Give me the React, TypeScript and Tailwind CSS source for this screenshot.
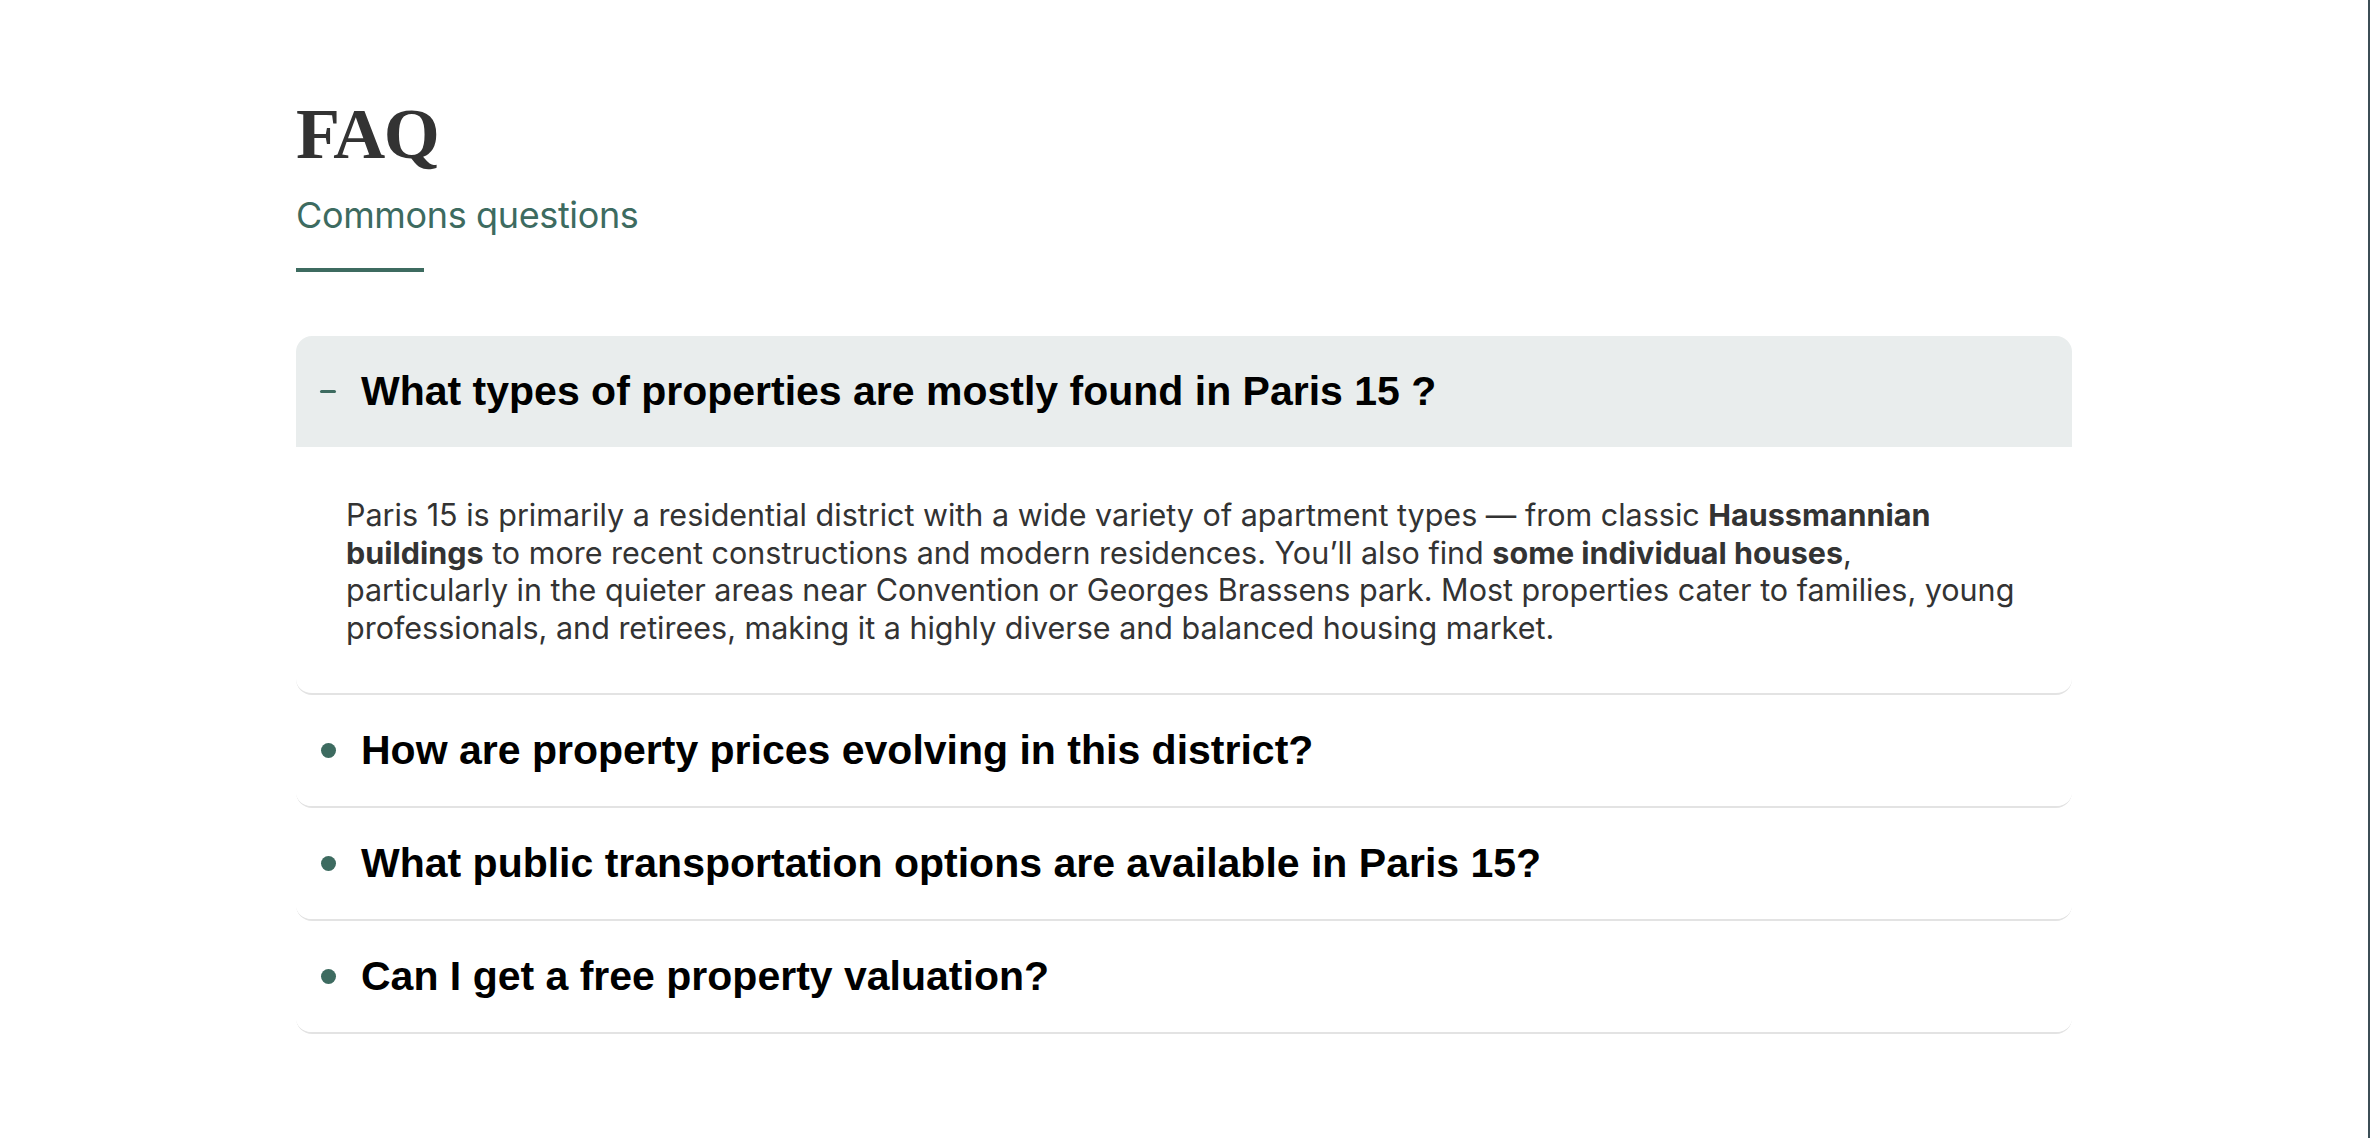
import { useState } from "react"
import type React from "react"

type Faq = {
  question: string
  answer: React.ReactNode
}

const faqs: Faq[] = [
  {
    question: "What types of properties are mostly found in Paris 15 ?",
    answer: (
      <>
        Paris 15 is primarily a residential district with a wide variety of apartment types — from classic{" "}
        <strong className="font-bold">Haussmannian buildings</strong> to more recent constructions and modern
        residences. You’ll also find <strong className="font-bold">some individual houses</strong>,
        <br />
        particularly in the quieter areas near Convention or Georges Brassens park. Most properties cater to families,
        young professionals, and retirees, making it a highly diverse and balanced housing market.
      </>
    ),
  },
  {
    question: "How are property prices evolving in this district?",
    answer: (
      <>
        Prices in Paris 15 have remained <strong className="font-bold">relatively stable</strong>, with small
        variations depending on the neighbourhood, the floor and the condition of the property.
      </>
    ),
  },
  {
    question: "What public transportation options are available in Paris 15?",
    answer: (
      <>
        The district is served by <strong className="font-bold">metro lines 6, 8, 10, 12 and 13</strong>, the RER C,
        the T2 and T3 tramways and many bus lines.
      </>
    ),
  },
  {
    question: "Can I get a free property valuation?",
    answer: (
      <>
        Yes. Contact our agency and one of our advisors will give you a{" "}
        <strong className="font-bold">free and no-obligation valuation</strong> of your property.
      </>
    ),
  },
]

function FaqItem({ faq, open, onToggle }: { faq: Faq; open: boolean; onToggle: () => void }) {
  return (
    <div className="bg-white rounded-2xl overflow-hidden border-b-2 border-[#e3e3e3]">
      <button
        type="button"
        onClick={onToggle}
        className={`w-full h-[111px] flex items-center pl-6 text-left ${open ? "bg-[#e9eded]" : "bg-white"}`}
      >
        <span className="w-4 flex items-center justify-center shrink-0">
          {open ? (
            <span className="block w-4 h-[3px] rounded-full bg-[#3d6b60]" />
          ) : (
            <span className="block w-[15px] h-[15px] rounded-full bg-[#3d6b60]" />
          )}
        </span>
        <span className="ml-[25px] font-['Liberation_Sans',Arial,sans-serif] font-bold text-[41px] leading-none text-black">
          {faq.question}
        </span>
      </button>
      {open && (
        <div className="pl-[50px] pr-[20px] pt-[49px] pb-[47px]">
          <p className="font-['Inter',sans-serif] text-[30.5px] leading-[37.5px] text-[#333333]">{faq.answer}</p>
        </div>
      )}
    </div>
  )
}

export default function App() {
  const [openIndex, setOpenIndex] = useState<number | null>(0)

  return (
    <div className="flex min-h-screen bg-white">
      <main className="flex-1">
        <div className="w-3/4 mx-auto pt-[98px] pb-[100px]">
          <h1 className="font-['Liberation_Serif','Times_New_Roman',serif] font-bold text-[72px] leading-none tracking-[-0.02em] text-[#333333]">
            FAQ
          </h1>
          <h2 className="mt-[27px] font-['Inter',sans-serif] text-[36px] leading-none tracking-[-0.01em] text-[#3d6b60]">
            Commons questions
          </h2>
          <div className="mt-[35px] w-32 h-1 bg-[#3d6b60]" />

          <div className="mt-16 flex flex-col">
            {faqs.map((faq, i) => (
              <FaqItem
                key={faq.question}
                faq={faq}
                open={openIndex === i}
                onToggle={() => setOpenIndex(openIndex === i ? null : i)}
              />
            ))}
          </div>
        </div>
      </main>
      <div className="w-[2px] bg-[#3c4e56] shrink-0" />
    </div>
  )
}
